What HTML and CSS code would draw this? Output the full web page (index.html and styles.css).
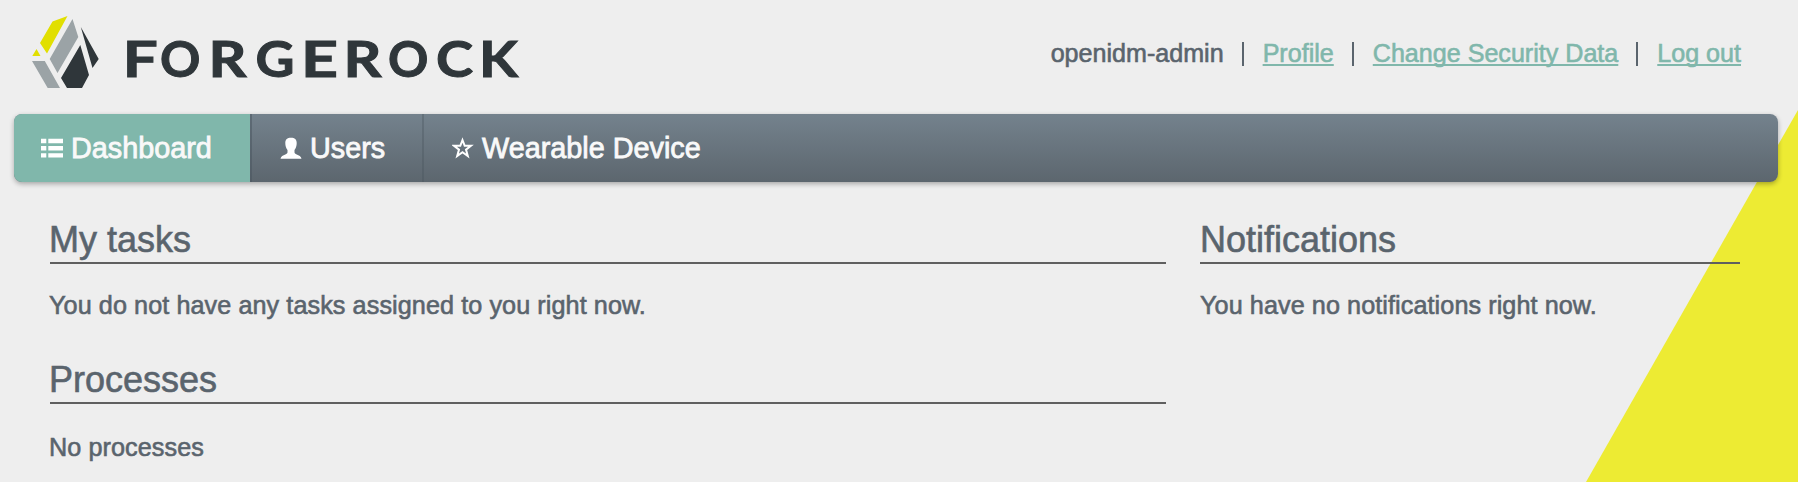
FILE: index.html
```html
<!DOCTYPE html>
<html lang="en">
<head>
<meta charset="utf-8">
<title>ForgeRock – Dashboard</title>
<link rel="stylesheet" href="styles.css">
</head>
<body>
<div class="page">
  <header class="header">
    <a class="logo" aria-label="ForgeRock">
      <svg width="500" height="84" viewBox="24 8 500 84">
        <path fill="#e1df00" d="M52.500 21.500 67.500 16 47 53.500 40 43zM36.500 49 40.500 56H32.300z"/>
        <path fill="#9ba3a6" d="M72.500 19 78.300 37 57.500 73 49.700 59zM32 61H44.800L60 88H47.700z"/>
        <path fill="#2f363a" d="M80.800 27 98.700 59 92.500 68zM80.300 45 89 75 82 88H67L61 78z"/>
        <text class="wordmark" y="77.2"><tspan x="122.800" textLength="35" lengthAdjust="spacingAndGlyphs">F</tspan><tspan x="160">O</tspan><tspan x="208.500" textLength="38" lengthAdjust="spacingAndGlyphs">R</tspan><tspan x="255.500" textLength="39" lengthAdjust="spacingAndGlyphs">G</tspan><tspan x="301" textLength="37" lengthAdjust="spacingAndGlyphs">E</tspan><tspan x="343.500" textLength="38" lengthAdjust="spacingAndGlyphs">R</tspan><tspan x="388">O</tspan><tspan x="436" textLength="37" lengthAdjust="spacingAndGlyphs">C</tspan><tspan x="479" textLength="39" lengthAdjust="spacingAndGlyphs">K</tspan></text>
      </svg>
    </a>
    <nav class="account">
      <span>openidm-admin</span><i class="divider"></i><a class="link">Profile</a><i class="divider"></i><a class="link">Change Security Data</a><i class="divider"></i><a class="link">Log out</a>
    </nav>
  </header>
  <nav class="menu">
    <a class="item item-active">
      <svg class="icon" width="22" height="20" viewBox="0 0 22 20"><path fill="#fff" d="M0 .7h5.300v4.600H0zM7.300.7H22v4.600H7.300zM0 8h5.300v4.600H0zM7.300 8H22v4.600H7.300zM0 15.300h5.300v4.200H0zM7.300 15.300H22v4.200H7.300z"/></svg>
      <span>Dashboard</span>
    </a>
    <a class="item item-users">
      <svg class="icon" width="22" height="22" viewBox="0 0 22 22"><path fill="#fff" d="M11 .8c3.800 0 5.700 1.900 5.700 5.200 0 2.500-.7 5.200-2.200 7v2.300c0 1.200.8 1.600 2.200 2.200 2.200 1 4.500 1.700 4.800 4.300H.5c.3-2.600 2.600-3.300 4.800-4.300 1.400-.6 2.200-1 2.200-2.200V13C6 11.200 5.300 8.500 5.300 6c0-3.300 1.900-5.200 5.700-5.200z"/></svg>
      <span>Users</span>
    </a>
    <a class="item item-device">
      <svg class="icon" width="22" height="22" viewBox="0 0 22 22"><path fill="none" stroke="#fff" stroke-width="2" d="M10.500 3 12.700 8.800H18.900L14 12.600 15.800 19 10.500 15.200 5.200 19 7 12.600 2.100 8.800H8.300z"/></svg>
      <span>Wearable Device</span>
    </a>
  </nav>
  <main class="content">
    <div class="column">
      <section class="panel">
        <h2 class="title">My tasks</h2>
        <p class="text">You do not have any tasks assigned to you right now.</p>
      </section>
      <section class="panel panel-processes">
        <h2 class="title">Processes</h2>
        <p class="text">No processes</p>
      </section>
    </div>
    <section class="panel panel-notifications">
      <h2 class="title">Notifications</h2>
      <p class="text">You have no notifications right now.</p>
    </section>
  </main>
</div>
</body>
</html>
```
FILE: styles.css
```css
* { box-sizing: border-box; }

body {
  margin: 0;
  background: #eee;
  color: #5a646d;
  font: 25.2px/30px "Liberation Sans", Arial, sans-serif;
  -webkit-text-stroke: .6px currentColor;
}

.page {
  height: 482px;
  overflow: hidden;
  position: relative;
  isolation: isolate;
}

.page::before {
  content: "";
  position: absolute;
  z-index: -1;
  top: 110px;
  right: 0;
  width: 212px;
  height: 372px;
  background: #edeb33;
  clip-path: polygon(100% 0, 100% 100%, 0 100%);
}

.header {
  display: flex;
  justify-content: space-between;
  height: 114px;
  padding: 8px 57px 0 24px;
}

.wordmark {
  font: 700 50px Lato, sans-serif;
  fill: #2f363a;
  -webkit-text-stroke: 0;
  stroke: #2f363a;
  stroke-width: 1px;
}

.account {
  display: flex;
  align-items: flex-start;
  padding-top: 30px;
  white-space: nowrap;
  font-size: 25.1px;
}

.divider {
  width: 2px;
  height: 24px;
  margin: 4px 19px 0 18px;
  background: #5a646d;
}

.link {
  color: #80b7ab;
  -webkit-text-stroke-color: #80b7ab;
  text-decoration: underline;
  text-decoration-thickness: 2px;
  text-decoration-skip-ink: none;
  text-underline-offset: 2px;
}

.menu {
  display: flex;
  height: 68px;
  margin: 0 20px 0 14px;
  overflow: hidden;
  border-radius: 8px;
  background: linear-gradient(#74828d, #5c666e);
  box-shadow: 0 2px 5px rgba(0, 0, 0, .3);
  color: #f9f9f9;
  font-size: 28.8px;
  -webkit-text-stroke: .8px #f9f9f9;
}

.item {
  display: flex;
  align-items: center;
  gap: 8px;
  height: 68px;
  padding-left: 27px;
  white-space: nowrap;
}

.icon { flex: none; }

.item-active {
  width: 236px;
  background: #80b7ab;
}

.item-users {
  width: 174px;
  padding-left: 28px;
  border: solid rgba(72, 84, 94, .5);
  border-width: 0 2px;
  border-right-color: rgba(72, 84, 94, .35);
}

.item-device { padding-left: 28px; }

.content {
  display: grid;
  grid-template-columns: 1116px 540px;
  column-gap: 34px;
  padding: 38px 0 0 50px;
}

.panel-processes { margin-top: 34px; }

.title {
  height: 44px;
  margin: 0;
  border-bottom: 2px solid #5f5f5f;
  font-size: 36px;
  font-weight: 400;
  line-height: 39px;
  text-indent: -1px;
}

.text {
  margin: 26px 0 0;
  height: 36px;
  letter-spacing: .08px;
  text-indent: -1px;
}

.panel-processes .text { margin-top: 28px; }

.panel-notifications .title,
.panel-notifications .text { text-indent: 0; }
```
